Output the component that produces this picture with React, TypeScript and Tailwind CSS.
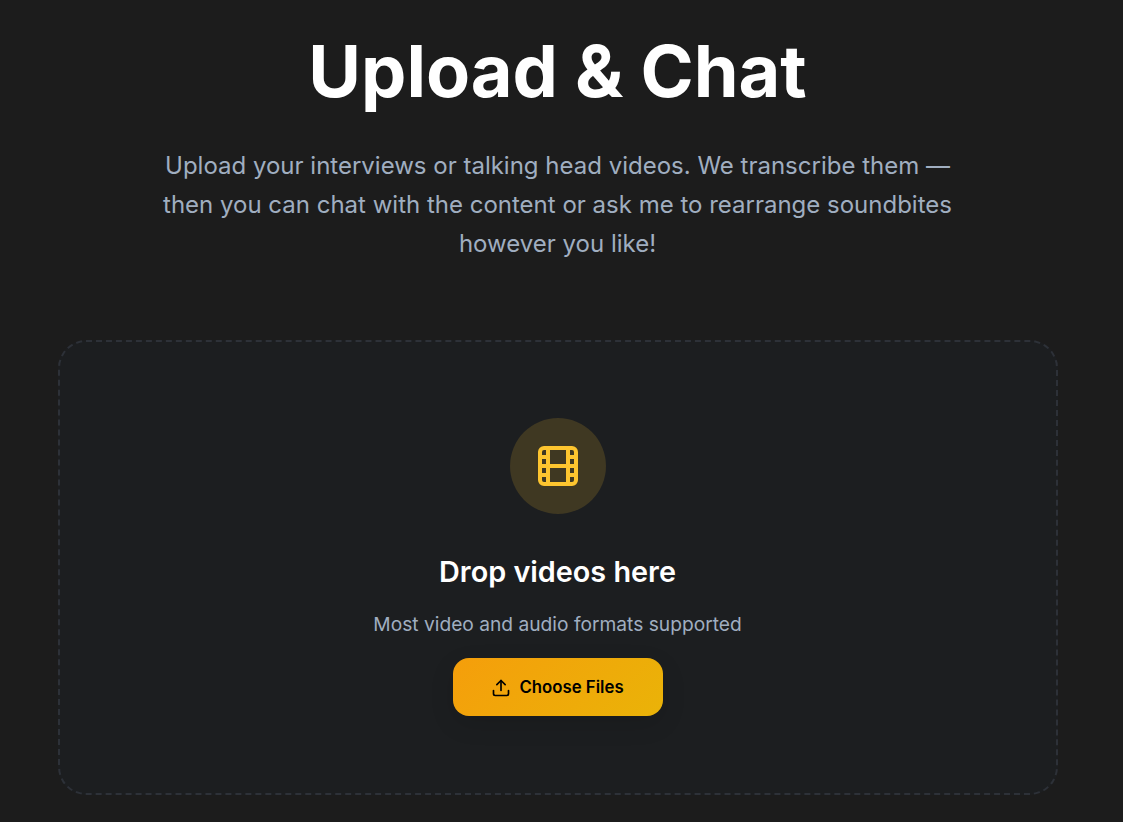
import { Film, Upload } from 'lucide-react'

export default function App() {
  return (
    <div className="h-[822px] overflow-hidden bg-[#1c1c1c] pr-2 font-['Inter',sans-serif]">
      <div className="mx-auto flex w-[1000px] flex-col items-center">
        <h1 className="mt-[31px] text-center text-[72px] leading-[80px] font-bold text-white">
          Upload &amp; Chat
        </h1>
        <p className="mt-[35px] w-[800px] text-center text-[24px] leading-[39px] text-[#a0aec0]">
          Upload your interviews or talking head videos. We transcribe them — then you can chat with the content or ask me to rearrange soundbites however you like!
        </p>
        <div className="mt-[77px] flex h-[455px] w-full flex-col items-center rounded-[28px] border-2 border-dashed border-[#2d3138] bg-[#1c1e20] pt-[76px]">
          <div className="flex h-24 w-24 items-center justify-center rounded-full bg-[#3f3822]">
            <Film className="text-[#fdc52f]" size={48} strokeWidth={2} />
          </div>
          <h3 className="mt-[38px] text-[28.8px] leading-[40px] font-semibold text-white">Drop videos here</h3>
          <p className="mt-[18px] text-[19.2px] leading-[28px] text-[#a0aec0]">Most video and audio formats supported</p>
          <button className="mt-[20px] flex h-[58px] w-[210px] items-center justify-center gap-2 rounded-2xl bg-[linear-gradient(135deg,#f59e0b,#eab308)] pt-px text-[16.8px] font-semibold text-black shadow-[0_8px_24px_rgba(0,0,0,0.12)]">
            <Upload size={20} strokeWidth={2} />
            Choose Files
          </button>
        </div>
      </div>
    </div>
  )
}
